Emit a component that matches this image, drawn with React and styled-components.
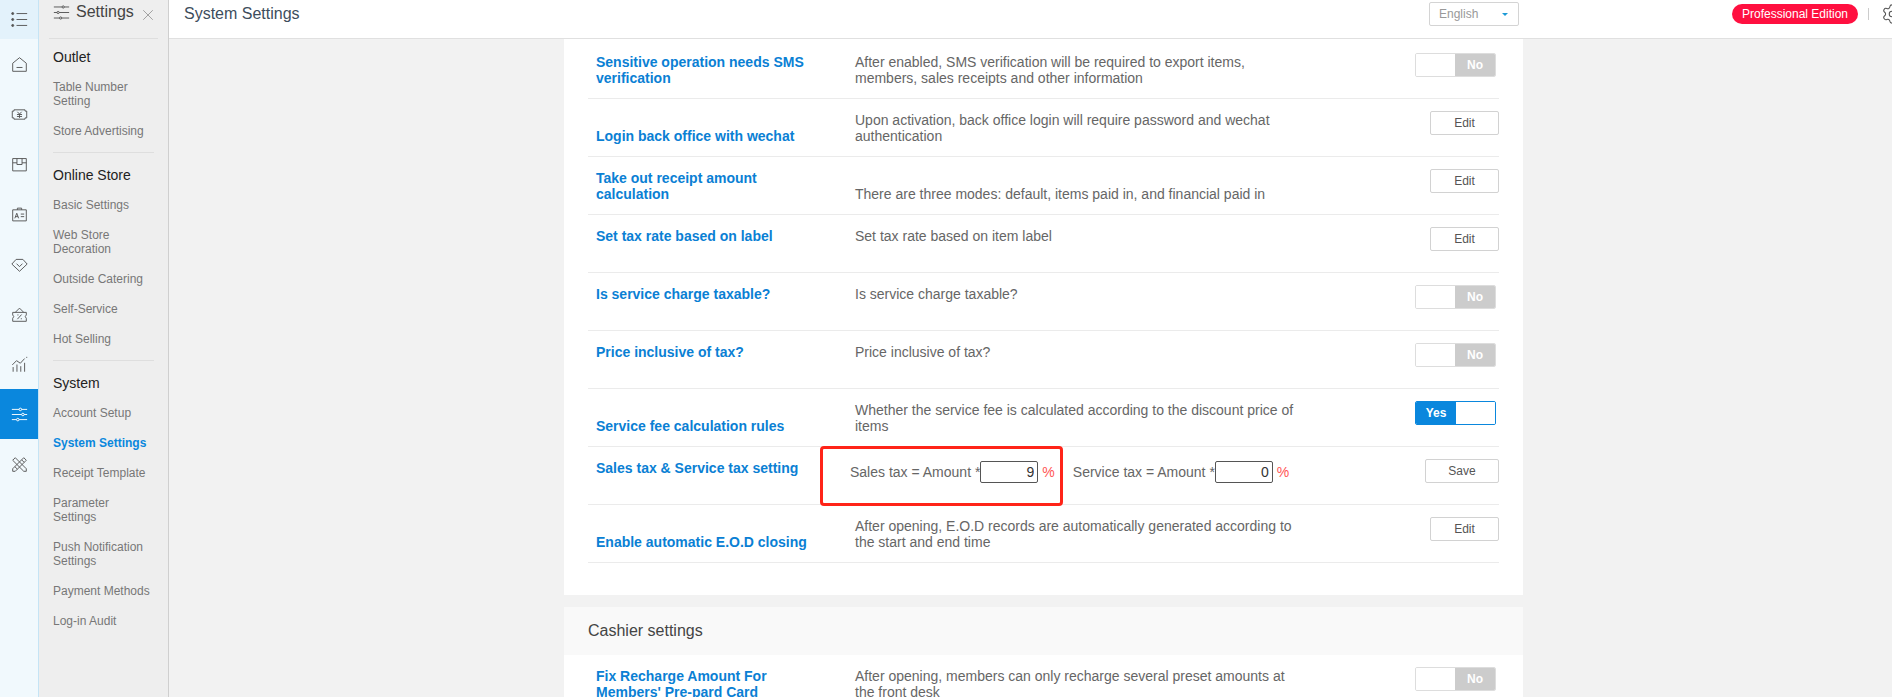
import styled, { createGlobalStyle } from "styled-components";
import { Settings as GearIcon, X } from "lucide-react";

const menu = [
  {
    title: "Outlet",
    items: ["Table Number Setting", "Store Advertising"],
  },
  {
    title: "Online Store",
    items: ["Basic Settings", "Web Store Decoration", "Outside Catering", "Self-Service", "Hot Selling"],
  },
  {
    title: "System",
    items: [
      "Account Setup",
      "System Settings",
      "Receipt Template",
      "Parameter Settings",
      "Push Notification Settings",
      "Payment Methods",
      "Log-in Audit",
    ],
  },
];

const railIcons = [
  { name: "home", d: "M2 8.500 L10 2 L18 8.500 V18 H2 Z M6.500 13.500 H13.500" },
  { name: "money", d: "M3.500 4.500 H16.500 V6 H18.500 V14 H16.500 V15.500 H3.500 V14 H1.500 V6 H3.500 Z M7.500 6.800 L10 9.500 L12.500 6.800 M7 10 H13 M7 12.300 H13 M10 9.500 V14" },
  { name: "box", d: "M2 3 H18 V17.500 H2 Z M2 8 H7 M13 8 H18 M7 3 V10 H13 V3" },
  { name: "card", d: "M2 4.500 H18 V17.500 H2 Z M7.500 4.500 V2.500 H12.500 V4.500 M4.500 14.500 L6.800 8.500 L9 14.500 M5.300 12.500 H8.200 M11.500 9.500 H15.500 M11.500 12.500 H15.500" },
  { name: "gem", d: "M6 4 H14 L19 9.500 L10 18 L1 9.500 Z M6.500 9 L10 12.500 L13.500 9" },
  { name: "coupon", d: "M2 7.500 H18 V10.500 Q15.500 12.500 18 14.500 V18 H2 V14.500 Q4.500 12.500 2 10.500 Z M5 7.500 L10 2.500 L15 7.500 M7.500 15.500 L12.500 10 M7.500 10.500 H8.800 M11.500 15 H12.800" },
  { name: "chart", d: "M2.500 18.500 V13 M7 18.500 V10 M11.500 18.500 V12 M16 18.500 V8 M1.500 10.500 L6.500 5.500 L11 8.500 L16 3 M18.500 1 V2.200" },
  { name: "sliders", d: "M1 4 H19 M1 10 H19 M1 16 H19", active: true },
  { name: "tools", d: "M2 5 L5 2 L18 15 V18 H15 Z M2 15 L15 2 L18 5 L5 18 L2 18 Z M12.500 4.500 L15.500 7.500 M4.500 12.500 L7.500 15.500" },
];

const rows = [
  {
    title: "Sensitive operation needs SMS verification",
    desc: "After enabled, SMS verification will be required to export items, members, sales receipts and other information",
    control: "off",
  },
  {
    title: "Login back office with wechat",
    desc: "Upon activation, back office login will require password and wechat authentication",
    control: "edit",
    lowTitle: true,
  },
  {
    title: "Take out receipt amount calculation",
    desc: "There are three modes: default, items paid in, and financial paid in",
    control: "edit",
    lowDesc: true,
  },
  { title: "Set tax rate based on label", desc: "Set tax rate based on item label", control: "edit" },
  { title: "Is service charge taxable?", desc: "Is service charge taxable?", control: "off" },
  { title: "Price inclusive of tax?", desc: "Price inclusive of tax?", control: "off" },
  {
    title: "Service fee calculation rules",
    desc: "Whether the service fee is calculated according to the discount price of items",
    control: "on",
    lowTitle: true,
  },
];

function RailIcon({ d, children }) {
  return (
    <RailSvg viewBox="0 0 20 20">
      <path d={d} />
      {children}
    </RailSvg>
  );
}

function Control({ type }) {
  if (type === "edit") return <ActionButton>Edit</ActionButton>;
  if (type === "on") {
    return (
      <Switch $on>
        <SwitchLabel $on>Yes</SwitchLabel>
        <SwitchKnob />
      </Switch>
    );
  }
  return (
    <Switch>
      <SwitchKnob />
      <SwitchLabel>No</SwitchLabel>
    </Switch>
  );
}

function SettingRow({ title, desc, control, lowTitle, lowDesc }) {
  return (
    <Row>
      <RowTitle $low={lowTitle}>{title}</RowTitle>
      <RowDesc $low={lowDesc}>{desc}</RowDesc>
      <Control type={control} />
    </Row>
  );
}

export default function App() {
  return (
    <Page>
      <GlobalStyle />
      <Rail>
        <RailTop>
          <RailSvg viewBox="0 0 20 20" $strong>
            <path d="M6.500 3 H19 M6.500 10 H19 M6.500 17 H19" />
            <circle cx="2" cy="3" r="1.200" fill="#555" />
            <circle cx="2" cy="10" r="1.200" fill="#555" />
            <circle cx="2" cy="17" r="1.200" fill="#555" />
          </RailSvg>
        </RailTop>
        {railIcons.map((icon) => (
          <RailItem key={icon.name} $active={icon.active}>
            <RailIcon d={icon.d}>
              {icon.active && (
                <>
                  <circle cx="11" cy="4" r="1.500" fill="#0a87dd" />
                  <circle cx="14" cy="10" r="1.500" fill="#0a87dd" />
                  <circle cx="8" cy="16" r="1.500" fill="#0a87dd" />
                </>
              )}
            </RailIcon>
          </RailItem>
        ))}
      </Rail>

      <Side>
        <SideHead>
          <RailSvg viewBox="0 0 20 20" $strong>
            <path d="M1 3.500 H19 M1 10 H19 M1 16.500 H19" />
            <circle cx="12" cy="3.500" r="1.300" fill="#eee" />
            <circle cx="6" cy="10" r="1.300" fill="#eee" />
            <circle cx="9" cy="16.500" r="1.300" fill="#eee" />
          </RailSvg>
          <SideTitle>Settings</SideTitle>
          <CloseIcon size={18} strokeWidth={1.200} />
        </SideHead>
        {menu.map((group) => (
          <SideGroup key={group.title}>
            <GroupTitle>{group.title}</GroupTitle>
            {group.items.map((item) => (
              <SideLink key={item} $active={item === "System Settings"}>
                {item}
              </SideLink>
            ))}
          </SideGroup>
        ))}
      </Side>

      <Body>
        <Header>
          <PageTitle>System Settings</PageTitle>
          <HeaderRight>
            <LangSelect>
              English
              <Caret />
            </LangSelect>
            <Edition>Professional Edition</Edition>
            <HeaderDivider />
            <Gear size={22} strokeWidth={1.200} />
          </HeaderRight>
        </Header>

        <Content>
          <Panel $first>
            <RowList>
              {rows.map((row) => (
                <SettingRow key={row.title} {...row} />
              ))}
              <Row>
                <RowTitle>Sales tax &amp; Service tax setting</RowTitle>
                <TaxFields>
                  <Highlight />
                  <TaxLabel>Sales tax = Amount *</TaxLabel>
                  <TaxInput readOnly value="9" />
                  <Percent>%</Percent>
                  <TaxLabel $second>Service tax = Amount *</TaxLabel>
                  <TaxInput readOnly value="0" />
                  <Percent>%</Percent>
                </TaxFields>
                <ActionButton $wide>Save</ActionButton>
              </Row>
              <SettingRow
                title="Enable automatic E.O.D closing"
                desc="After opening, E.O.D records are automatically generated according to the start and end time"
                control="edit"
                lowTitle
              />
            </RowList>
          </Panel>

          <Panel>
            <PanelHead>Cashier settings</PanelHead>
            <RowList $plain>
              <SettingRow
                title="Fix Recharge Amount For Members' Pre-pard Card"
                desc="After opening, members can only recharge several preset amounts at the front desk"
                control="off"
              />
            </RowList>
          </Panel>
        </Content>
      </Body>
    </Page>
  );
}

const GlobalStyle = createGlobalStyle`
  html, body {
    margin: 0;
    height: 100%;
    overflow: hidden;
    background: #f2f2f2;
    font-family: "Liberation Sans", Arial, sans-serif;
  }
  * {
    box-sizing: border-box;
  }
`;

const Page = styled.div`
  display: flex;
  width: 1892px;
  height: 697px;
  overflow: hidden;
`;

const Rail = styled.nav`
  flex: 0 0 39px;
  background: #f1f9fd;
  border-right: 1px solid #c5e4f5;
`;

const RailTop = styled.div`
  display: flex;
  align-items: center;
  justify-content: center;
  height: 39px;
  background: #e3f2fb;
`;

const RailItem = styled.div`
  display: flex;
  align-items: center;
  justify-content: center;
  height: 50px;
  color: ${(p) => (p.$active ? "#fff" : "#555")};
  background: ${(p) => (p.$active ? "#0a87dd" : "transparent")};
`;

const RailSvg = styled.svg`
  width: 17px;
  height: 17px;
  flex: none;
  fill: none;
  stroke: ${(p) => (p.$strong ? "#555" : "currentColor")};
  stroke-width: 1.100;
`;

const Side = styled.aside`
  flex: 0 0 130px;
  min-width: 0;
  background: #eeeeee;
  border-right: 1px solid #cfcfcf;
  padding: 0 14px;
`;

const SideHead = styled.div`
  display: flex;
  align-items: center;
  gap: 6px;
  height: 39px;
  margin: 0 -4px 3px;
  padding: 0 0 14px 4px;
  border-bottom: 1px solid #dedede;
`;

const SideTitle = styled.span`
  font-size: 16px;
  color: #444;
`;

const CloseIcon = styled(X)`
  color: #999;
  margin: 6px 0 0 -1px;
  flex: none;
`;

const SideGroup = styled.div`
  padding-bottom: 6px;
  border-bottom: 1px solid #dedede;
  margin-bottom: 7px;

  &:last-child {
    border-bottom: none;
  }
`;

const GroupTitle = styled.div`
  font-size: 14px;
  line-height: 30px;
  color: #222;
`;

const SideLink = styled.div`
  max-width: 100px;
  font-size: 12px;
  line-height: 14px;
  padding: 8px 0;
  color: ${(p) => (p.$active ? "#0a87dd" : "#777")};
  font-weight: ${(p) => (p.$active ? "bold" : "normal")};
  white-space: ${(p) => (p.$active ? "nowrap" : "normal")};
`;

const Body = styled.div`
  flex: 1;
  min-width: 0;
  display: flex;
  flex-direction: column;
`;

const Header = styled.header`
  flex: 0 0 39px;
  display: flex;
  align-items: center;
  justify-content: space-between;
  background: #fff;
  border-bottom: 1px solid #e0e0e0;
  padding: 0 0 10px 15px;
  overflow: hidden;
`;

const PageTitle = styled.div`
  font-size: 16px;
  color: #3d4d5c;
`;

const HeaderRight = styled.div`
  display: flex;
  align-items: center;
  margin-right: -11px;
`;

const LangSelect = styled.div`
  position: relative;
  width: 90px;
  height: 24px;
  padding-left: 9px;
  border: 1px solid #d4d4d4;
  border-radius: 2px;
  font-size: 12px;
  line-height: 22px;
  color: #999;
  margin-right: 213px;
`;

const Caret = styled.span`
  position: absolute;
  right: 10px;
  top: 10px;
  border-left: 3px solid transparent;
  border-right: 3px solid transparent;
  border-top: 3px solid #1c9ad6;
`;

const Edition = styled.div`
  width: 126px;
  height: 20px;
  border-radius: 10px;
  background: #ff1040;
  color: #fff;
  font-size: 12px;
  line-height: 20px;
  text-align: center;
`;

const HeaderDivider = styled.span`
  width: 1px;
  height: 12px;
  background: #ccc;
  margin: 0 12px 0 10px;
`;

const Gear = styled(GearIcon)`
  color: #555;
  flex: none;
`;

const Content = styled.main`
  flex: 1;
  overflow: hidden;
  padding-left: 395px;
`;

const Panel = styled.section`
  width: 959px;
  background: #fff;
  margin-bottom: 12px;
  padding-bottom: ${(p) => (p.$first ? "32px" : "0")};
`;

const PanelHead = styled.div`
  height: 48px;
  padding-left: 24px;
  background: #f9f9f9;
  font-size: 16px;
  line-height: 48px;
  color: #444;
`;

const RowList = styled.div`
  margin: 0 24px;
  padding-top: ${(p) => (p.$plain ? "0" : "2px")};
`;

const Row = styled.div`
  display: grid;
  grid-template-columns: 259px 442px 1fr;
  align-items: start;
  height: 58px;
  padding: 13px 0 0 8px;
  border-bottom: 1px solid #ebebeb;
`;

const RowTitle = styled.div`
  width: 222px;
  padding-top: ${(p) => (p.$low ? "16px" : "0")};
  font-size: 14px;
  line-height: 16px;
  font-weight: bold;
  color: #0a80d4;
`;

const RowDesc = styled.div`
  padding-top: ${(p) => (p.$low ? "16px" : "0")};
  font-size: 14px;
  line-height: 16px;
  color: #666;
`;

const ActionButton = styled.button`
  justify-self: end;
  width: ${(p) => (p.$wide ? "74px" : "69px")};
  height: 24px;
  margin-top: -1px;
  padding: 0;
  border: 1px solid #d2d2d2;
  border-radius: 2px;
  background: #fff;
  font-family: inherit;
  font-size: 12px;
  color: #555;
`;

const Switch = styled.div`
  justify-self: end;
  display: flex;
  width: 81px;
  height: 24px;
  margin: -1px 3px 0 0;
  border: 1px solid ${(p) => (p.$on ? "#0a87dd" : "#ddd")};
  border-radius: 2px;
  overflow: hidden;
`;

const SwitchKnob = styled.span`
  flex: 1;
  background: #fff;
`;

const SwitchLabel = styled.span`
  flex: 0 0 40px;
  text-align: center;
  font-size: 12px;
  font-weight: bold;
  line-height: 22px;
  color: #fff;
  background: ${(p) => (p.$on ? "#0a87dd" : "#ccc")};
`;

const TaxFields = styled.div`
  position: relative;
  display: flex;
  align-items: center;
  height: 22px;
  margin: 1px 0 0 -5px;
  white-space: nowrap;
`;

const Highlight = styled.span`
  position: absolute;
  left: -30px;
  top: -15px;
  width: 243px;
  height: 60px;
  border: 3px solid #ff2418;
  border-radius: 4px;
  pointer-events: none;
`;

const TaxLabel = styled.span`
  margin-left: ${(p) => (p.$second ? "18px" : "0")};
  font-size: 14px;
  color: #666;
`;

const TaxInput = styled.input`
  width: 58px;
  height: 22px;
  padding: 0 3px;
  border: 1px solid #555;
  border-radius: 2px;
  text-align: right;
  font-family: inherit;
  font-size: 14px;
  color: #333;
  outline: none;
`;

const Percent = styled.span`
  margin-left: 4px;
  font-size: 14px;
  color: #f55;
`;
